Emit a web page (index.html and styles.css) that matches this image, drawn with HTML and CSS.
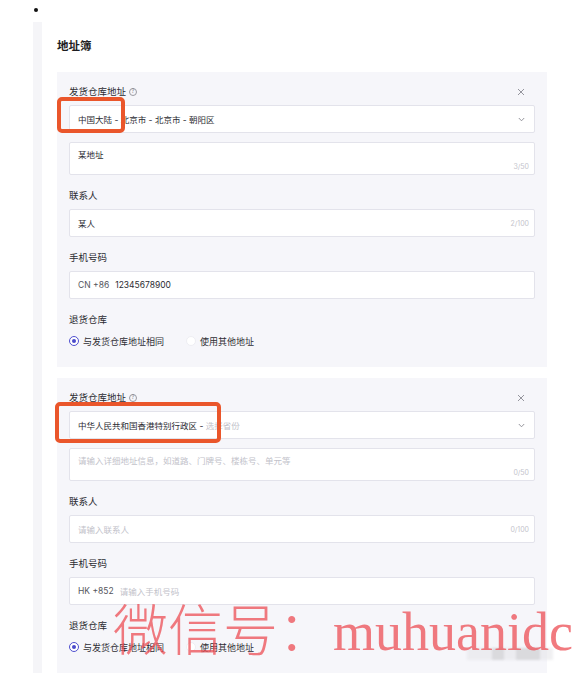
FILE: index.html
```html
<!DOCTYPE html>
<html lang="zh-CN">
<head>
<meta charset="utf-8">
<title>地址簿</title>
<link rel="stylesheet" href="styles.css">
</head>
<body>
<div class="bullet-row"><span class="bullet"></span></div>
<div class="panel">
  <h2 class="title">地址簿</h2>

  <div class="card">
    <div class="label-row">
      <span class="label">发货仓库地址 <span class="help">?</span></span>
      <svg class="close" width="8" height="8" viewBox="0 0 8 8"><path d="M1 1L7 7M7 1L1 7" stroke="#8a8a92" stroke-width="0.9" fill="none"/></svg>
    </div>
    <div class="input select">
      <span class="value">中国大陆 - 北京市 - 北京市 - 朝阳区</span>
      <svg class="chev" width="7" height="5" viewBox="0 0 7 5"><path d="M0.8 1L3.5 3.8L6.2 1" stroke="#8a8a92" stroke-width="0.9" fill="none"/></svg>
    </div>
    <div class="textarea">
      <span class="value">某地址</span>
      <span class="count">3/50</span>
    </div>
    <div class="label label-block">联系人</div>
    <div class="input">
      <span class="value">某人</span>
      <span class="count">2/100</span>
    </div>
    <div class="label label-block">手机号码</div>
    <div class="input phone">
      <span class="prefix">CN +86</span>
      <span class="value">12345678900</span>
    </div>
    <div class="label label-block">退货仓库</div>
    <div class="radios">
      <span class="radio"><span class="dot on"></span>与发货仓库地址相同</span>
      <span class="radio"><span class="dot"></span>使用其他地址</span>
    </div>
  </div>

  <div class="card">
    <div class="label-row">
      <span class="label">发货仓库地址 <span class="help">?</span></span>
      <svg class="close" width="8" height="8" viewBox="0 0 8 8"><path d="M1 1L7 7M7 1L1 7" stroke="#8a8a92" stroke-width="0.9" fill="none"/></svg>
    </div>
    <div class="input select">
      <span class="value">中华人民共和国香港特别行政区 - <span class="ph">选择省份</span></span>
      <svg class="chev" width="7" height="5" viewBox="0 0 7 5"><path d="M0.8 1L3.5 3.8L6.2 1" stroke="#8a8a92" stroke-width="0.9" fill="none"/></svg>
    </div>
    <div class="textarea">
      <span class="ph">请输入详细地址信息，如道路、门牌号、楼栋号、单元等</span>
      <span class="count">0/50</span>
    </div>
    <div class="label label-block">联系人</div>
    <div class="input">
      <span class="ph">请输入联系人</span>
      <span class="count">0/100</span>
    </div>
    <div class="label label-block">手机号码</div>
    <div class="input phone">
      <span class="prefix">HK +852</span>
      <span class="ph">请输入手机号码</span>
    </div>
    <div class="label label-block">退货仓库</div>
    <div class="radios">
      <span class="radio"><span class="dot on"></span>与发货仓库地址相同</span>
      <span class="radio"><span class="dot"></span>使用其他地址</span>
    </div>
  </div>
</div>

<div class="mark mark-1"></div>
<div class="mark mark-2"></div>
<div class="smudge"><span class="s1"></span><span class="s2"></span></div>
<div class="watermark"><span class="wm-cjk">微信号：</span><span class="wm-latin">muhuanidc</span></div>
</body>
</html>
```

FILE: styles.css
```css
html, body {
  margin: 0;
  padding: 0;
  overflow: hidden;
  background: #ffffff;
}

body {
  position: relative;
  width: 587px;
  height: 673px;
  font-family: Inter, "Noto Sans CJK SC", sans-serif;
  color: #26262b;
}

.bullet-row {
  box-sizing: border-box;
  height: 22px;
  padding: 8px 0 0 34px;
}

.bullet {
  display: block;
  width: 4px;
  height: 4px;
  border-radius: 50%;
  background: #111;
}

.panel {
  box-sizing: border-box;
  margin-left: 33px;
  border-left: 9px solid #f5f5f8;
  padding: 16px 0 0 15px;
  width: 514px;
  height: 651px;
}

.title {
  margin: 0 0 18px;
  font-size: 11.5px;
  line-height: 16px;
  font-weight: 600;
  color: #1d1d22;
}

.card {
  background: #f6f6fa;
  padding: 12px 12px 18px;
  margin-bottom: 11px;
}

.card:last-child {
  margin-bottom: 0;
}

.label-row {
  display: flex;
  justify-content: space-between;
  align-items: center;
  height: 16px;
  margin-bottom: 5px;
}

.label {
  display: flex;
  align-items: center;
  gap: 3px;
  font-size: 9.5px;
  line-height: 16px;
  color: #2b2b31;
}

.label-block {
  margin-bottom: 5px;
}

.help {
  display: inline-flex;
  align-items: center;
  justify-content: center;
  box-sizing: border-box;
  width: 8px;
  height: 8px;
  border: 0.8px solid #9a9aa2;
  border-radius: 50%;
  font-size: 5.5px;
  line-height: 1;
  color: #8a8a92;
}

.close {
  margin-right: 10px;
}

.input {
  box-sizing: border-box;
  display: flex;
  align-items: center;
  justify-content: space-between;
  height: 28px;
  border: 1px solid #e3e3eb;
  border-radius: 2px;
  background: #fff;
  padding: 0 5px 0 8px;
  margin-bottom: 13px;
  font-size: 8.5px;
}

.select {
  padding-right: 9px;
  margin-bottom: 9px;
}

.phone {
  justify-content: flex-start;
  gap: 6px;
}

.textarea {
  box-sizing: border-box;
  display: flex;
  flex-direction: column;
  justify-content: space-between;
  height: 33px;
  border: 1px solid #e3e3eb;
  border-radius: 2px;
  background: #fff;
  padding: 6px 5px 3px 8px;
  margin-bottom: 13px;
  font-size: 8.5px;
  line-height: 12px;
}

.textarea .count {
  align-self: flex-end;
}

.value {
  color: #2c2c32;
}

.prefix {
  color: #55555c;
}

.ph {
  color: #c2c2ca;
}

.count {
  font-size: 7px;
  color: #c4c4cc;
}

.radios {
  display: flex;
  align-items: center;
  gap: 22px;
  height: 16px;
}

.radio {
  display: flex;
  align-items: center;
  gap: 4px;
  font-size: 9px;
  color: #2e2e34;
}

.dot {
  box-sizing: border-box;
  display: inline-flex;
  align-items: center;
  justify-content: center;
  width: 10px;
  height: 10px;
  border-radius: 50%;
  border: 1px solid #eeeef3;
  background: #fff;
}

.dot.on {
  border: 1.3px solid #4f4fcf;
}

.dot.on::after {
  content: "";
  width: 4px;
  height: 4px;
  border-radius: 50%;
  background: #4a4acb;
}

/* annotation overlays */
.mark {
  position: absolute;
  box-sizing: border-box;
  border: 4px solid #ea562b;
  border-radius: 5px;
}

.mark-1 {
  left: 57px;
  top: 97px;
  width: 68px;
  height: 36px;
}

.mark-2 {
  left: 55px;
  top: 402px;
  width: 166px;
  height: 41px;
}

.smudge {
  position: absolute;
  left: 467px;
  top: 648px;
  width: 86px;
  height: 12px;
  background: rgba(228, 228, 231, 0.55);
  filter: blur(1px);
}

.smudge .s1,
.smudge .s2 {
  position: absolute;
  top: 0;
  height: 12px;
  background: rgba(205, 205, 209, 0.6);
}

.smudge .s1 {
  left: 25px;
  width: 12px;
}

.smudge .s2 {
  left: 49px;
  width: 24px;
}

.watermark {
  position: absolute;
  left: 113px;
  top: 596px;
  white-space: nowrap;
  line-height: 60px;
  color: rgba(236, 78, 84, 0.75);
}

.wm-cjk {
  font-family: "Noto Sans CJK SC", sans-serif;
  font-weight: 200;
  font-size: 55px;
}

.wm-latin {
  font-family: "Liberation Serif", serif;
  font-size: 54px;
}
```
